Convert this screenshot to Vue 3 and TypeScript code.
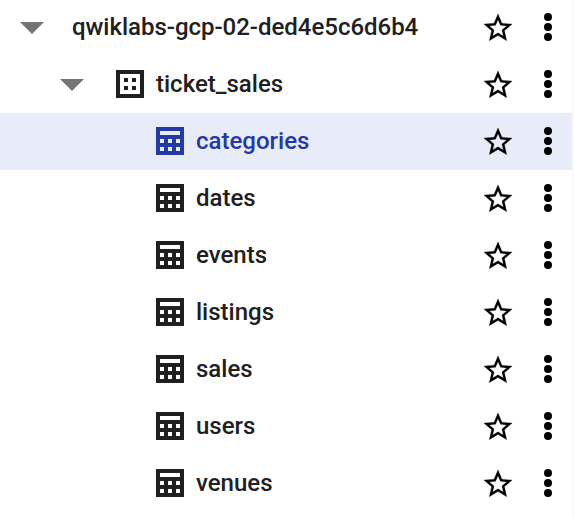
<script setup lang="ts">
interface TreeNode {
  name: string
  level: 'project' | 'dataset' | 'table'
  selected?: boolean
}

const nodes: TreeNode[] = [
  { name: 'qwiklabs-gcp-02-ded4e5c6d6b4', level: 'project' },
  { name: 'ticket_sales', level: 'dataset' },
  { name: 'categories', level: 'table', selected: true },
  { name: 'dates', level: 'table' },
  { name: 'events', level: 'table' },
  { name: 'listings', level: 'table' },
  { name: 'sales', level: 'table' },
  { name: 'users', level: 'table' },
  { name: 'venues', level: 'table' },
]
</script>

<template>
  <main class="explorer">
    <ul class="tree">
      <li
        v-for="node in nodes"
        :key="node.name"
        class="row"
        :class="[node.level, { selected: node.selected }]"
      >
        <svg v-if="node.level !== 'table'" class="arrow" viewBox="0 0 24 12">
          <path d="M0 0H24L12 12Z" />
        </svg>
        <svg v-if="node.level === 'dataset'" class="icon" viewBox="0 0 28 28">
          <path
            fill-rule="evenodd"
            d="M0 0H28V28H0ZM4 4V24H24V4ZM8 8h4v4h-4zM16 8h4v4h-4zM8 16h4v4h-4zM16 16h4v4h-4z"
          />
        </svg>
        <svg v-if="node.level === 'table'" class="icon" viewBox="0 0 28 28">
          <path
            fill-rule="evenodd"
            d="M0 0H28V28H0ZM4 4V8H24V4ZM4 12v4h4v-4zM12 12v4h4v-4zM20 12v4h4v-4zM4 20v4h4v-4zM12 20v4h4v-4zM20 20v4h4v-4z"
          />
        </svg>
        <span class="label">{{ node.name }}</span>
        <svg class="star" viewBox="0 0 24 24">
          <path
            d="M22 9.24l-7.19-.62L12 2 9.19 8.63 2 9.24l5.46 4.73L5.82 21 12 17.27 18.18 21l-1.63-7.03L22 9.24zM12 15.4l-3.76 2.27 1-4.28-3.32-2.88 4.38-.38L12 6.1l1.71 4.04 4.38.38-3.32 2.88 1 4.28L12 15.4z"
          />
        </svg>
        <svg class="more" viewBox="0 0 8 28">
          <circle cx="4" cy="4" r="4" />
          <circle cx="4" cy="14" r="4" />
          <circle cx="4" cy="24" r="4" />
        </svg>
      </li>
    </ul>
  </main>
</template>

<style>
body {
  margin: 0;
  background: #fff;
}
</style>

<style scoped>
.explorer {
  box-sizing: border-box;
  height: 518px;
  overflow: hidden;
  border-right: 2px solid #fafafa;
  font-family: Roboto, sans-serif;
  font-size: 24px;
  font-weight: 500;
  color: #202020;
}

.tree {
  list-style: none;
  margin: -1px 0 0;
  padding: 0;
}

.row {
  box-sizing: border-box;
  display: flex;
  align-items: center;
  height: 57px;
  padding: 0 20px 1px 156px;
}

.row.project {
  padding-left: 20px;
  letter-spacing: -0.02px;
}

.row.dataset {
  padding-left: 60px;
}

.row.selected {
  background: #e7ecf8;
  color: #2438a6;
}

.arrow {
  width: 24px;
  height: 12px;
  margin: 2px 28px 0 0;
  fill: #757575;
}

.dataset .arrow {
  margin-right: 32px;
}

.icon {
  width: 28px;
  height: 28px;
  margin-right: 12px;
  fill: currentColor;
}

.label {
  flex: 1;
  line-height: 28px;
  white-space: nowrap;
}

.star {
  width: 34px;
  height: 34px;
  margin: 2px 29px 0 0;
  fill: #000;
  stroke: #000;
  stroke-width: 0.15;
}

.more {
  width: 8px;
  height: 28px;
  fill: #000;
}
</style>
